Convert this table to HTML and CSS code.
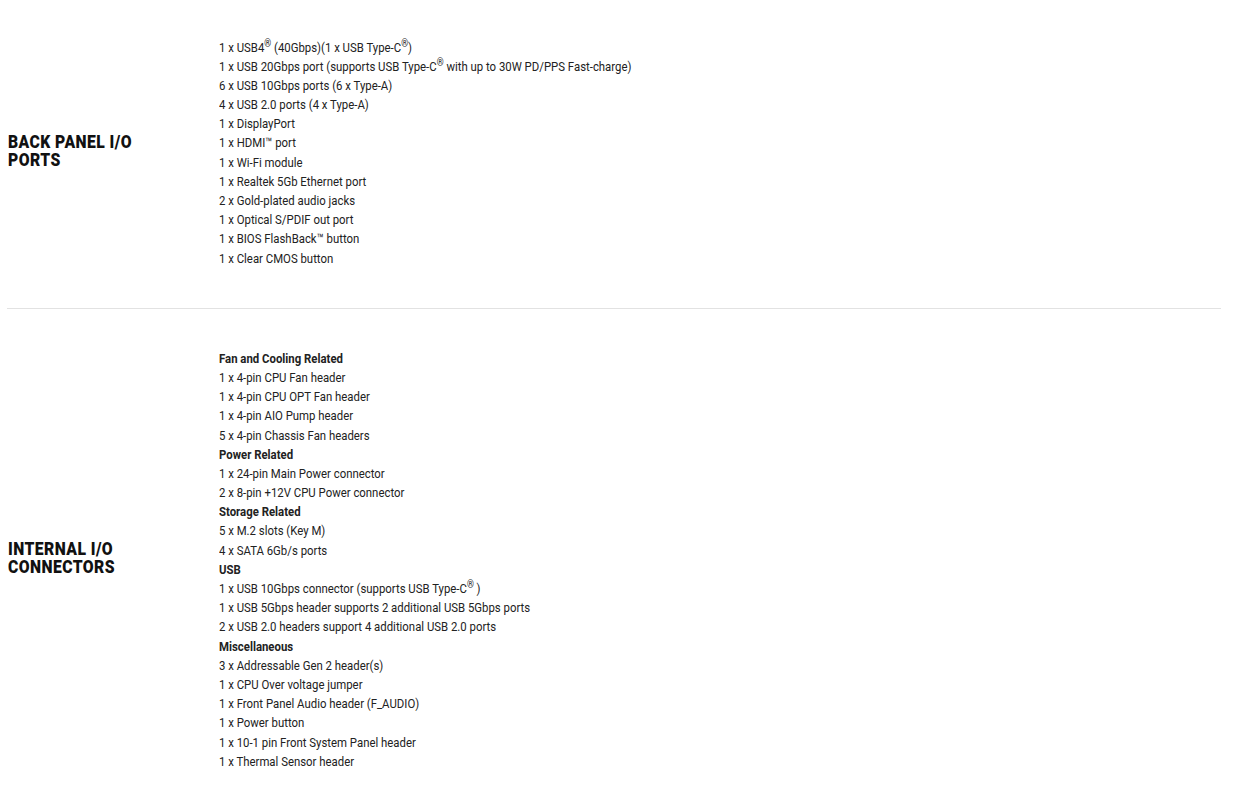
FILE: index.html
```html
<!DOCTYPE html>
<html lang="en">
<head>
<meta charset="utf-8">
<title>Specs</title>
<link rel="stylesheet" href="styles.css">
</head>
<body>
<div class="specs">
  <div class="row first">
    <div class="label"><div class="label-text">BACK PANEL I/O PORTS</div></div>
    <div class="value">
      <div>1 x USB4<sup>®</sup> (40Gbps)(1 x USB Type-C<sup>®</sup>)</div>
      <div>1 x USB 20Gbps port (supports USB Type-C<sup>®</sup> with up to 30W PD/PPS Fast-charge)</div>
      <div>6 x USB 10Gbps ports (6 x Type-A)</div>
      <div>4 x USB 2.0 ports (4 x Type-A)</div>
      <div>1 x DisplayPort</div>
      <div>1 x HDMI™ port</div>
      <div>1 x Wi-Fi module</div>
      <div>1 x Realtek 5Gb Ethernet port</div>
      <div>2 x Gold-plated audio jacks</div>
      <div>1 x Optical S/PDIF out port</div>
      <div>1 x BIOS FlashBack™ button</div>
      <div>1 x Clear CMOS button</div>
    </div>
  </div>
  <div class="row">
    <div class="label"><div class="label-text">INTERNAL I/O CONNECTORS</div></div>
    <div class="value">
      <div class="sub">Fan and Cooling Related</div>
      <div>1 x 4-pin CPU Fan header</div>
      <div>1 x 4-pin CPU OPT Fan header</div>
      <div>1 x 4-pin AIO Pump header</div>
      <div>5 x 4-pin Chassis Fan headers</div>
      <div class="sub">Power Related</div>
      <div>1 x 24-pin Main Power connector</div>
      <div>2 x 8-pin +12V CPU Power connector</div>
      <div class="sub">Storage Related</div>
      <div>5 x M.2 slots (Key M)</div>
      <div>4 x SATA 6Gb/s ports</div>
      <div class="sub">USB</div>
      <div>1 x USB 10Gbps connector (supports USB Type-C<sup>®</sup> )</div>
      <div>1 x USB 5Gbps header supports 2 additional USB 5Gbps ports</div>
      <div>2 x USB 2.0 headers support 4 additional USB 2.0 ports</div>
      <div class="sub">Miscellaneous</div>
      <div>3 x Addressable Gen 2 header(s)</div>
      <div>1 x CPU Over voltage jumper</div>
      <div>1 x Front Panel Audio header (F_AUDIO)</div>
      <div>1 x Power button</div>
      <div>1 x 10-1 pin Front System Panel header</div>
      <div>1 x Thermal Sensor header</div>
    </div>
  </div>
</div>
</body>
</html>
```
FILE: styles.css
```css
html, body {
  margin: 0;
  padding: 0;
  background: #fff;
}
body {
  font-family: Roboto, "Liberation Sans", sans-serif;
  color: #222;
}
.specs {
  width: 1214px;
  margin-left: 7px;
}
.row {
  display: flex;
  align-items: center;
  padding: 40px 0;
  border-bottom: 1px solid #e2e2e2;
}
.row:last-child {
  border-bottom: none;
}
.row.first {
  padding-top: 37.5px;
}
.label {
  flex: 0 0 212px;
  padding-left: 1px;
  margin-bottom: 3px;
  box-sizing: border-box;
}
.label-text {
  width: 165px;
  font-size: 18.5px;
  line-height: 18px;
  font-weight: 900;
  letter-spacing: 0.5px;
  color: #111;
  transform: scaleX(0.85);
  transform-origin: left center;
}
.value {
  flex: 1 1 auto;
  font-size: 13px;
  line-height: 19.18px;
  color: #222;
  transform: scaleX(0.875);
  transform-origin: left center;
}
.value sup {
  font-size: 10px;
  line-height: 0;
  vertical-align: baseline;
  position: relative;
  top: -0.5em;
}
.sub {
  font-weight: 700;
}
```
